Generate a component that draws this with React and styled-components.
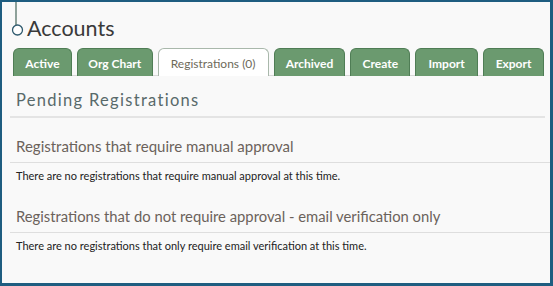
import { createGlobalStyle, styled } from "styled-components";

const GlobalStyle = createGlobalStyle`
    html, body {
        margin: 0;
        padding: 0;
        background: #f9f9f9;
    }
    body {
        font-family: Lato, "Noto Sans", sans-serif;
    }
`;

const Frame = styled.div`
    width: 553px;
    height: 286px;
    box-sizing: border-box;
    border: 2px solid #1e5d80;
    border-right-width: 3px;
    border-bottom-width: 3px;
    background: #f9f9f9;
    padding: 0 0 0 8px;
    overflow: hidden;
`;

const Header = styled.div`
    display: flex;
    align-items: flex-start;
    height: 43px;
    padding-left: 1px;
`;

const Title = styled.h1`
    margin: 13px 0 0 2px;
    font-size: 21.5px;
    font-weight: 400;
    color: #3a3a3a;
    line-height: 26px;
`;

const TabBar = styled.div`
    display: flex;
    gap: 5px;
    margin: 3px 6px 0 3px;
    border-bottom: 1px solid #d8d8d8;
`;

const Tab = styled.div`
    width: ${({ $w }) => $w}px;
    height: 28px;
    box-sizing: border-box;
    display: flex;
    align-items: center;
    justify-content: center;
    border: 1px solid ${({ $active }) => ($active ? "#a9b8ab" : "#4f7d55")};
    border-bottom: none;
    border-radius: 6px 6px 0 0;
    background: ${({ $active }) => ($active ? "#ffffff" : "#6b9a6f")};
    color: ${({ $active }) => ($active ? "#6e6a5a" : "#ffffff")};
    font-size: 12px;
    font-weight: ${({ $active }) => ($active ? 400 : 700)};
    margin-bottom: -1px;
    padding-top: 1px;
`;

const PageHeading = styled.h2`
    margin: 14px 5px 0 0;
    padding: 0 0 6px 6px;
    font-size: 16.5px;
    font-weight: 400;
    letter-spacing: 1.3px;
    color: #58696a;
    border-bottom: 2px solid #e4e4e4;
`;

const Section = styled.div`
    margin-top: ${({ $top }) => $top}px;
`;

const SectionHeading = styled.h3`
    margin: 0;
    padding: 0 0 7px 6px;
    font-size: ${({ $size }) => $size}px;
    font-weight: 400;
    color: #6b625b;
    border-bottom: 1px solid #dedede;
`;

const Note = styled.p`
    margin: 0;
    padding: 6px 0 0 6px;
    font-size: 11px;
    color: #222222;
`;

function Marker() {
    return (
        <svg width="14" height="40" viewBox="0 0 14 40">
            <line x1="5" y1="0" x2="5" y2="23" stroke="#45665a" strokeWidth="1.2" />
            <circle cx="6.5" cy="28" r="5" fill="#ffffff" stroke="#2f5a6e" strokeWidth="1.3" />
        </svg>
    );
}

const tabs = [
    { label: "Active", w: 59 },
    { label: "Org Chart", w: 76 },
    { label: "Registrations (0)", w: 111, active: true },
    { label: "Archived", w: 72 },
    { label: "Create", w: 60 },
    { label: "Import", w: 63 },
    { label: "Export", w: 61 },
];

function App() {
    return (
        <>
            <GlobalStyle />
            <Frame>
                <Header>
                    <Marker />
                    <Title>Accounts</Title>
                </Header>
                <TabBar>
                    {tabs.map((t) => (
                        <Tab key={t.label} $w={t.w} $active={t.active}>
                            {t.label}
                        </Tab>
                    ))}
                </TabBar>
                <PageHeading>Pending Registrations</PageHeading>
                <Section $top={19}>
                    <SectionHeading $size={15}>Registrations that require manual approval</SectionHeading>
                    <Note>There are no registrations that require manual approval at this time.</Note>
                </Section>
                <Section $top={25}>
                    <SectionHeading $size={14.8}>
                        Registrations that do not require approval - email verification only
                    </SectionHeading>
                    <Note>There are no registrations that only require email verification at this time.</Note>
                </Section>
            </Frame>
        </>
    );
}

export default App;
